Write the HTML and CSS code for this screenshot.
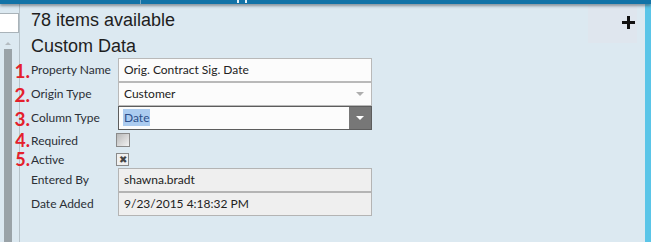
FILE: index.html
```html
<!DOCTYPE html>
<html>
<head>
    <title>Custom Data</title>
    <meta charset="utf-8">
    <link rel="stylesheet" href="styles.css">
</head>
<body>

<div class="topbar">
    <span class="topbar-divider"></span>
    <span class="topbar-mark mark-a"></span>
    <span class="topbar-mark mark-b"></span>
</div>

<div class="page">
    <div class="sidebar">
        <div class="search-box"></div>
        <div class="scroll-track">
            <span class="scroll-arrow"></span>
            <span class="scroll-thumb"></span>
        </div>
    </div>

    <div class="content">
        <div class="heading-row">
            <div class="headings">
                <div class="count">78 items available</div>
                <div class="section-title">Custom Data</div>
            </div>
            <div class="add-box">
                <svg width="13" height="13" viewBox="0 0 13 13"><rect x="5" y="0" width="3" height="13" fill="#111"/><rect x="0" y="5" width="13" height="3" fill="#111"/></svg>
            </div>
        </div>

        <div class="form">
            <span class="step">1.</span>
            <label class="field-label">Property Name</label>
            <div class="field">Orig. Contract Sig. Date</div>

            <span class="step">2.</span>
            <label class="field-label">Origin Type</label>
            <div class="field select">Customer<span class="caret"></span></div>

            <span class="step">3.</span>
            <label class="field-label">Column Type</label>
            <div class="field select active-select"><span class="selected">Date</span><span class="drop-btn"><span class="caret"></span></span></div>

            <span class="step step-small">4.</span>
            <label class="field-label label-small">Required</label>
            <div class="check-cell"><span class="check"></span></div>

            <span class="step step-small">5.</span>
            <label class="field-label label-small">Active</label>
            <div class="check-cell"><span class="check checked">&#x2716;</span></div>

            <span class="step"></span>
            <label class="field-label">Entered By</label>
            <div class="field readonly">shawna.bradt</div>

            <span class="step"></span>
            <label class="field-label">Date Added</label>
            <div class="field readonly">9/23/2015 4:18:32 PM</div>
        </div>
    </div>

    <div class="edge"></div>
</div>

</body>
</html>
```

FILE: styles.css
```css
body, html {
    margin: 0; padding: 0;
}
body {
    width: 651px;
    height: 242px;
    overflow: hidden;
    background: #dce9f1;
    font-family: Lato, 'Open Sans', sans-serif;
    color: #222;
    display: flex;
    flex-direction: column;
}
.topbar {
    height: 4px;
    background: #1273a7;
    box-shadow: 0 2px 3px rgba(60, 70, 80, 0.55);
    position: relative;
    z-index: 2;
    flex: none;
}
.topbar-divider {
    position: absolute;
    left: 140px;
    top: 0;
    width: 1px;
    height: 4px;
    background: #6fa8c8;
}
.topbar-mark {
    position: absolute;
    top: 0;
    width: 2px;
    height: 3px;
    background: #e8f2f8;
}
.mark-a { left: 237px; }
.mark-b { left: 245px; }
.page {
    flex: 1;
    display: flex;
    min-height: 0;
}
.sidebar {
    width: 19px;
    flex: none;
    display: flex;
    flex-direction: column;
    border-right: 1px solid #b7c3ca;
}
.search-box {
    margin-top: 9px;
    height: 18px;
    background: #fff;
    border: 1px solid #a9b3b9;
    border-left: none;
}
.scroll-track {
    flex: 1;
    margin-top: 5px;
    display: flex;
    flex-direction: column;
    align-items: center;
    padding-left: 3px;
    width: 9px;
}
.scroll-arrow {
    width: 0;
    height: 0;
    margin-top: 4px;
    border-left: 3px solid transparent;
    border-right: 3px solid transparent;
    border-bottom: 3px solid #b4bcc1;
}
.scroll-thumb {
    flex: 1;
    width: 8px;
    margin-top: 4px;
    background: #9aa3a8;
}
.content {
    flex: 1;
    padding-left: 11px;
}
.heading-row {
    display: flex;
}
.headings {
    flex: 1;
}
.count, .section-title {
    font-family: 'Liberation Sans', Arial, sans-serif;
    font-size: 18px;
    line-height: 20px;
    color: #1e1e1e;
}
.count {
    margin-top: 5px;
    padding-top: 1px;
}
.section-title {
    margin-top: 6px;
}
.add-box {
    width: 49px;
    height: 38px;
    margin-top: 1px;
    margin-right: 8px;
    background: #dfe6ee;
    display: flex;
    justify-content: flex-end;
    align-items: flex-start;
    padding: 11px 2px 0 0;
    box-sizing: border-box;
}
.form {
    margin-left: -19px;
    margin-top: 2px;
    display: grid;
    grid-template-columns: 19px 87px 254px;
    grid-template-rows: 24px 24px 24px 19px 19px 24px 24px;
}
.step {
    font-weight: bold;
    font-size: 19px;
    color: #e4202c;
    text-align: right;
    line-height: 20px;
    padding-top: 3px;
    padding-right: 1px;
}
.field-label {
    font-size: 12px;
    line-height: 24px;
    color: #2b2f36;
}
.step-small {
    font-size: 18px;
    line-height: 17px;
    padding-top: 2px;
}
.label-small {
    line-height: 21px;
}
.field {
    border: 1px solid #b9b9b9;
    background: #fcfcfc;
    font-size: 12px;
    line-height: 22px;
    padding-left: 5px;
    position: relative;
}
.caret {
    position: absolute;
    right: 7px;
    top: 9px;
    width: 0;
    height: 0;
    border-left: 4px solid transparent;
    border-right: 4px solid transparent;
    border-top: 4px solid #aeaeae;
}
.active-select {
    border-color: #5d5d5d;
    padding-left: 4px;
}
.selected {
    background: #acccf0;
    color: #2d4f8a;
    padding: 1px 1px;
}
.drop-btn {
    position: absolute;
    right: 0;
    top: 0;
    bottom: 0;
    width: 22px;
    background: #777;
}
.drop-btn .caret {
    right: 7px;
    border-top-color: #fff;
}
.readonly {
    background: #efefef;
    border-color: #b4b4b4;
}
.check-cell {
    display: flex;
    align-items: center;
}
.check {
    width: 12px;
    height: 12px;
    border: 1px solid #8a8a8a;
    background: linear-gradient(135deg, #b8b8b8, #f2f2f2);
    margin-left: -2px;
    font-size: 10px;
    line-height: 12px;
    text-align: center;
    color: #444;
}
.check.checked {
    width: 11px;
    height: 11px;
    line-height: 11px;
    background: #f0f0f0;
    margin-top: 2px;
}
.edge {
    width: 6px;
    flex: none;
    background: #5ac5e8;
}
```
